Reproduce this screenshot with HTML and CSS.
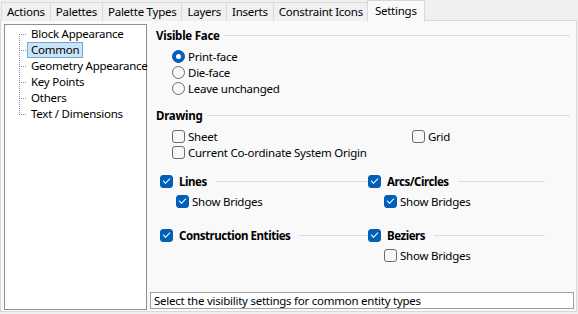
FILE: index.html
```html
<!DOCTYPE html>
<html lang="en">
<head>
    <meta charset="UTF-8">
    <title>Settings</title>
    <link rel="stylesheet" href="styles.css">
</head>
<body>
<div class="tabs">
    <span class="tab">Actions</span>
    <span class="tab">Palettes</span>
    <span class="tab">Palette Types</span>
    <span class="tab">Layers</span>
    <span class="tab">Inserts</span>
    <span class="tab">Constraint Icons</span>
    <span class="tab active">Settings</span>
</div>
<div class="panel">
    <ul class="tree">
        <li class="first"><span class="branch"></span><span class="label">Block Appearance</span></li>
        <li><span class="branch"></span><span class="label selected">Common</span></li>
        <li><span class="branch"></span><span class="label">Geometry Appearance</span></li>
        <li><span class="branch"></span><span class="label">Key Points</span></li>
        <li><span class="branch"></span><span class="label">Others</span></li>
        <li class="last"><span class="branch"></span><span class="label">Text / Dimensions</span></li>
    </ul>
    <div class="pane">
        <div class="section-head visible-head"><span>Visible Face</span><i class="rule"></i></div>
        <div class="radios">
            <div class="row"><span class="radio on"></span>Print-face</div>
            <div class="row"><span class="radio"></span>Die-face</div>
            <div class="row"><span class="radio"></span>Leave unchanged</div>
        </div>
        <div class="section-head drawing-head"><span>Drawing</span><i class="rule"></i></div>
        <div class="drawing">
            <div class="row"><span class="check"></span>Sheet</div>
            <div class="row"><span class="check"></span>Grid</div>
            <div class="row wide"><span class="check"></span>Current Co-ordinate System Origin</div>
        </div>
        <div class="groups">
            <div class="group">
                <div class="group-head"><span class="check on"></span><b>Lines</b><i class="rule"></i></div>
                <div class="row sub"><span class="check on"></span>Show Bridges</div>
            </div>
            <div class="group">
                <div class="group-head"><span class="check on"></span><b>Arcs/Circles</b><i class="rule"></i></div>
                <div class="row sub"><span class="check on"></span>Show Bridges</div>
            </div>
            <div class="group lower">
                <div class="group-head"><span class="check on"></span><b>Construction Entities</b><i class="rule"></i></div>
            </div>
            <div class="group lower">
                <div class="group-head"><span class="check on"></span><b>Beziers</b><i class="rule"></i></div>
                <div class="row sub"><span class="check"></span>Show Bridges</div>
            </div>
        </div>
        <div class="status">Select the visibility settings for common entity types</div>
    </div>
</div>
</body>
</html>
```

FILE: styles.css
```css
* {
    margin: 0;
    padding: 0;
    box-sizing: border-box;
}

body {
    background: #f0f0f0;
    font-family: "Noto Sans", "Open Sans", sans-serif;
    font-size: 11.5px;
    letter-spacing: -0.25px;
    color: #000;
    width: 578px;
    height: 314px;
    overflow: hidden;
}

/* tab strip */
.tabs {display: flex;align-items: flex-end;height: 21px;padding-left: 1px;}

.tab {
    height: 19px;
    line-height: 18px;
    padding: 0 5px;
    border: 1px solid #d9d9d9;
    border-bottom: none;
    margin-right: -1px;
    background: #f0f0f0;
}

.tab.active {
    height: 22px;
    line-height: 19px;
    padding: 0 7px;
    margin: 0 -1px -1px -1px;
    background: #f9f9f9;
    position: relative;
    z-index: 1;
}

.panel {
    display: flex;
    gap: 3px;
    width: 577px;
    height: 292px;
    margin-top: -1px;
    padding: 3px 2px 2px 3px;
    background: #f9f9f9;
    border: 1px solid #d9d9d9;
}

/* tree */
.tree {
    list-style: none;
    width: 143px;
    height: 286px;
    background: #fff;
    border: 1px solid #8f8f8f;
    padding: 1px 0 0 14px;
}

.tree li {display: flex;align-items: center;height: 16px;}

.branch {
    width: 8px;
    height: 16px;
    flex: none;
    background-image: repeating-linear-gradient(to bottom, #8a8a8a 0 1px, transparent 1px 2px),
                      repeating-linear-gradient(to right, #8a8a8a 0 1px, transparent 1px 2px);
    background-size: 1px 100%, 100% 1px;
    background-position: left top, left 8px;
    background-repeat: no-repeat;
}

.tree li.first .branch {background-size: 1px 50%, 100% 1px;background-position: left bottom, left 8px;}
.tree li.last .branch {background-size: 1px 9px, 100% 1px;background-position: left top, left 8px;}

.label {
    height: 16px;
    line-height: 14px;
    padding: 0 3px;
    border: 1px solid transparent;
    white-space: nowrap;
}

.label.selected {background: #cce4f7;border-color: #6fa9dc;}

/* right side */
.pane {display: flex;flex-direction: column;width: 424px;}

.section-head {display: flex;align-items: center;height: 16px;padding-left: 6px;font-weight: bold;padding-right: 4px;}
.visible-head {margin-top: 3px;}
.drawing-head {margin-top: 11px;}

.rule {flex: 1;height: 1px;background: #d8dfe7;margin-left: 4px;}

.row {display: flex;align-items: center;height: 16px;white-space: nowrap;}

.radios {margin-top: 5px;padding-left: 22px;}

.drawing {display: grid;grid-template-columns: 240px 1fr;margin-top: 5px;padding-left: 22px;}
.drawing .wide {grid-column: 1 / 3;}

.groups {display: grid;grid-template-columns: 208px 177px;padding-left: 10px;margin-top: 13px;}
.group.lower {margin-top: 18px;}

.group-head {display: flex;align-items: center;height: 16px;}
.group-head b {margin-left: 3px;letter-spacing: -0.45px;}
.group-head .rule {margin-left: 9px;}
.group-head + .row {margin-top: 4px;}
.sub {padding-left: 16px;}

/* controls */
.radio, .check {
    width: 13px;
    height: 13px;
    flex: none;
    border: 1px solid #6b6b6b;
    background: #f7f7f7;
    margin-right: 3px;
    display: inline-flex;
    align-items: center;
    justify-content: center;
}

.radio {border-radius: 50%;}
.radio.on {background: #005fb8;border-color: #005fb8;}
.radio.on:after {content: "";width: 5px;height: 5px;border-radius: 50%;background: #fff;}

.check {border-radius: 3px;}
.check.on {background: #005fb8;border-color: #005fb8;}
.check.on:after {
    content: "";
    width: 6px;
    height: 3px;
    border-left: 1px solid #fff;
    border-bottom: 1px solid #fff;
    transform: rotate(-45deg);
    margin-top: -2px;
}

.status {
    margin-top: auto;
    height: 17px;
    line-height: 15px;
    padding-left: 3px;
    background: #fff;
    border: 1px solid #a0a0a0;
    white-space: nowrap;
    overflow: hidden;
}
```
